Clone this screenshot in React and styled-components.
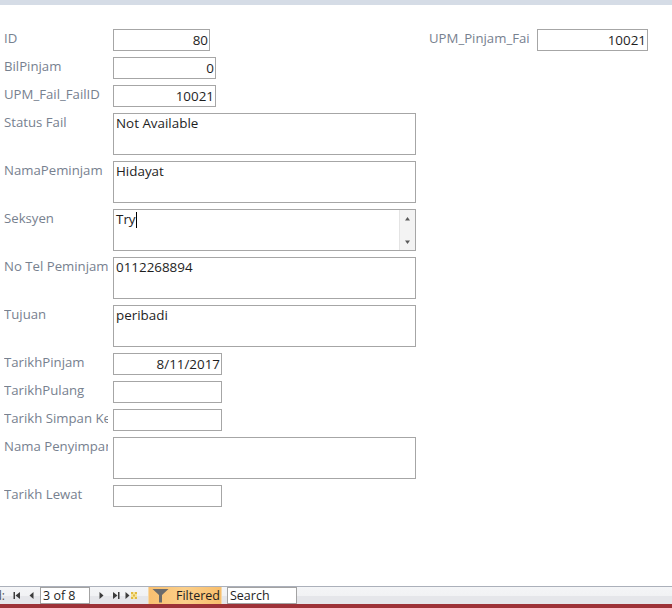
import React from "react";
import styled, { createGlobalStyle } from "styled-components";

const GlobalStyle = createGlobalStyle`
  html, body {
    margin: 0;
    padding: 0;
    background: #ffffff;
  }
  body {
    font-family: "Open Sans", "Noto Sans", sans-serif;
  }
`;

const Page = styled.div`
  width: 672px;
  height: 608px;
  display: flex;
  flex-direction: column;
  overflow: hidden;
  background: #ffffff;
`;

const TopBar = styled.div`
  height: 5px;
  background: #d5dce6;
  flex-shrink: 0;
`;

const FormArea = styled.div`
  flex: 1;
  display: flex;
  flex-direction: row;
  padding-top: 24px;
`;

const LeftColumn = styled.div`
  display: flex;
  flex-direction: column;
  gap: 6px;
  padding-left: 4px;
  width: 425px;
`;

const RightColumn = styled.div`
  display: flex;
  flex-direction: column;
`;

const Row = styled.div`
  display: flex;
  flex-direction: row;
  align-items: flex-start;
`;

const Label = styled.div`
  width: ${(p) => p.$width || 104}px;
  margin-right: ${(p) => p.$gap || 5}px;
  height: 22px;
  line-height: 19px;
  font-size: 13.2px;
  color: #77818f;
  white-space: nowrap;
  overflow: hidden;
`;

const Box = styled.div`
  position: relative;
  box-sizing: border-box;
  width: ${(p) => p.$width}px;
  height: ${(p) => (p.$tall ? 42 : 22)}px;
  border: 1px solid #a6a6a6;
  background: #ffffff;
  font-size: 13.4px;
  color: #1e1e1e;
  line-height: 19px;
  padding: ${(p) => (p.$tall ? "0 2px" : "1px 1px 0 2px")};
  text-align: ${(p) => (p.$align === "right" ? "right" : "left")};
  white-space: nowrap;
  overflow: hidden;
`;

const Caret = styled.span`
  display: inline-block;
  width: 1px;
  height: 16px;
  background: #000000;
  vertical-align: -4px;
`;

const ScrollTrack = styled.div`
  position: absolute;
  top: 0;
  right: 0;
  bottom: 0;
  width: 16px;
  background: #f3f3f3;
  border-left: 1px solid #e4e4e4;
  display: flex;
  flex-direction: column;
  justify-content: space-between;
  align-items: center;
  padding: 6px 0 5px 0;
  box-sizing: border-box;
`;

const BottomArea = styled.div`
  flex-shrink: 0;
  display: flex;
  flex-direction: column;
`;

const NavBar = styled.div`
  height: 17px;
  border-top: 1px solid #abb0ba;
  background: linear-gradient(#f4f5f7 0%, #f1f2f4 50%, #e5e6ea 55%, #e5e6ea 100%);
  display: flex;
  flex-direction: row;
  align-items: center;
  font-size: 12px;
  color: #1e1e1e;
`;

const RedStrip = styled.div`
  height: 4px;
  background: #9d3238;
`;

const Clipped = styled.div`
  width: 5px;
  overflow: hidden;
  display: flex;
  justify-content: flex-end;
  white-space: nowrap;
  font-size: 12px;
  color: #555;
  margin-right: 5px;
`;

const NavButton = styled.div`
  width: ${(p) => p.$width || 14}px;
  height: 17px;
  display: flex;
  align-items: center;
  justify-content: center;
`;

const RecordBox = styled.div`
  box-sizing: border-box;
  width: 50px;
  height: 17px;
  border: 1px solid #a3a3a3;
  background: #ffffff;
  padding-left: 2px;
  line-height: 15px;
  font-size: 12.5px;
  margin: 0 4px 0 0;
`;

const FilterButton = styled.div`
  box-sizing: border-box;
  width: 74px;
  height: 17px;
  margin-left: 10px;
  background: linear-gradient(90deg, #f9c070 0%, #fbcf8a 50%, #f8be6c 100%);
  border-left: 1px solid #f5d8a8;
  border-right: 1px solid #f5d8a8;
  display: flex;
  align-items: center;
  gap: 7px;
  padding-left: 3px;
  font-size: 12.5px;
  color: #1e1e1e;
`;

const SearchBox = styled.div`
  box-sizing: border-box;
  width: 70px;
  height: 17px;
  margin-left: 5px;
  border: 1px solid #a3a3a3;
  background: #ffffff;
  padding-left: 2px;
  line-height: 15px;
  font-size: 12.5px;
`;

const Arrow = ({ dir }) => (
  <svg width="7" height="6" viewBox="0 0 7 6">
    {dir === "up" ? (
      <path d="M3.5 1 L6 4.5 L1 4.5 Z" fill="#5a5a5a" />
    ) : (
      <path d="M1 1.5 L6 1.5 L3.5 5 Z" fill="#5a5a5a" />
    )}
  </svg>
);

const FirstIcon = () => (
  <svg width="8" height="9" viewBox="0 0 8 9">
    <rect x="0.5" y="1" width="1.5" height="7" fill="#3c3c3c" />
    <path d="M7 1 L2.5 4.5 L7 8 Z" fill="#3c3c3c" />
  </svg>
);

const PrevIcon = () => (
  <svg width="5" height="9" viewBox="0 0 5 9">
    <path d="M4.5 1 L0.5 4.5 L4.5 8 Z" fill="#3c3c3c" />
  </svg>
);

const NextIcon = () => (
  <svg width="5" height="9" viewBox="0 0 5 9">
    <path d="M0.5 1 L4.5 4.5 L0.5 8 Z" fill="#3c3c3c" />
  </svg>
);

const LastIcon = () => (
  <svg width="8" height="9" viewBox="0 0 8 9">
    <path d="M1 1 L5.5 4.5 L1 8 Z" fill="#3c3c3c" />
    <rect x="6" y="1" width="1.5" height="7" fill="#3c3c3c" />
  </svg>
);

const NewIcon = () => (
  <svg width="12" height="9" viewBox="0 0 12 9">
    <path d="M0.5 1 L4.5 4.5 L0.5 8 Z" fill="#3c3c3c" />
    <rect x="6" y="1" width="6" height="7" fill="#f6e39a" />
    <rect x="6" y="1" width="2" height="2" fill="#e0b941" />
    <rect x="10" y="1" width="2" height="2" fill="#e0b941" />
    <rect x="8" y="3.5" width="2" height="2" fill="#e0b941" />
    <rect x="6" y="6" width="2" height="2" fill="#e0b941" />
    <rect x="10" y="6" width="2" height="2" fill="#e0b941" />
  </svg>
);

const FunnelIcon = () => (
  <svg width="17" height="15" viewBox="0 0 17 15">
    <path d="M0.5 1 L16.5 1 L10 7 L10 14.5 L7 14.5 L7 7 Z" fill="#6b6b6b" />
  </svg>
);

const fields = [
  { label: "ID", value: "80", width: 97, align: "right" },
  { label: "BilPinjam", value: "0", width: 103, align: "right" },
  { label: "UPM_Fail_FailID", value: "10021", width: 103, align: "right" },
  { label: "Status Fail", value: "Not Available", width: 303, tall: true },
  { label: "NamaPeminjam", value: "Hidayat", width: 303, tall: true },
  { label: "Seksyen", value: "Try", width: 303, tall: true, scroll: true },
  { label: "No Tel Peminjam", value: "0112268894", width: 303, tall: true },
  { label: "Tujuan", value: "peribadi", width: 303, tall: true },
  { label: "TarikhPinjam", value: "8/11/2017", width: 109, align: "right" },
  { label: "TarikhPulang", value: "", width: 109 },
  { label: "Tarikh Simpan Kembali", value: "", width: 109 },
  { label: "Nama Penyimpan", value: "", width: 303, tall: true },
  { label: "Tarikh Lewat", value: "", width: 109 },
];

function App() {
  return (
    <Page>
      <GlobalStyle />
      <TopBar />
      <FormArea>
        <LeftColumn>
          {fields.map((f) => (
            <Row key={f.label}>
              <Label>{f.label}</Label>
              <Box $width={f.width} $tall={f.tall} $align={f.align}>
                {f.value}
                {f.scroll && (
                  <>
                    <Caret />
                    <ScrollTrack>
                      <Arrow dir="up" />
                      <Arrow dir="down" />
                    </ScrollTrack>
                  </>
                )}
              </Box>
            </Row>
          ))}
        </LeftColumn>
        <RightColumn>
          <Row>
            <Label $width={101} $gap={7}>UPM_Pinjam_Fail</Label>
            <Box $width={111} $align="right">10021</Box>
          </Row>
        </RightColumn>
      </FormArea>
      <BottomArea>
        <NavBar>
          <Clipped>Record:</Clipped>
          <NavButton $width={13}><FirstIcon /></NavButton>
          <NavButton $width={17}><PrevIcon /></NavButton>
          <RecordBox>3 of 8</RecordBox>
          <NavButton $width={14}><NextIcon /></NavButton>
          <NavButton $width={16}><LastIcon /></NavButton>
          <NavButton $width={14}><NewIcon /></NavButton>
          <FilterButton>
            <FunnelIcon />
            Filtered
          </FilterButton>
          <SearchBox>Search</SearchBox>
        </NavBar>
        <RedStrip />
      </BottomArea>
    </Page>
  );
}

export default App;
